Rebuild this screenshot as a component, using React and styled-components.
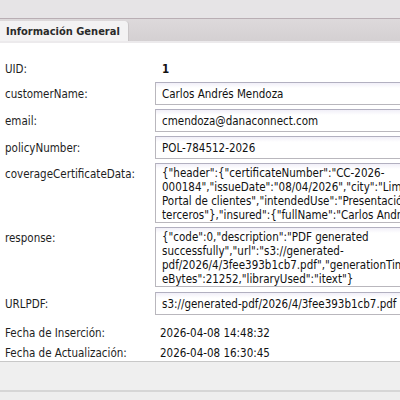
import styled, { createGlobalStyle } from "styled-components";

const GlobalStyle = createGlobalStyle`
    html, body {
        margin: 0;
        padding: 0;
        background: #eeeeee;
        overflow: hidden;
    }
`

const fields = [
    { label: 'customerName:', value: 'Carlos Andrés Mendoza' },
    { label: 'email:', value: 'cmendoza@danaconnect.com' },
    { label: 'policyNumber:', value: 'POL-784512-2026' },
]

const coverageLines = [
    '{"header":{"certificateNumber":"CC-2026-',
    '000184","issueDate":"08/04/2026","city":"Lima","channel":',
    'Portal de clientes","intendedUse":"Presentación ante',
    'terceros"},"insured":{"fullName":"Carlos Andrés Mendoza",',
]

const responseLines = [
    '{"code":0,"description":"PDF generated',
    'successfully","url":"s3://generated-',
    'pdf/2026/4/3fee393b1cb7.pdf","generationTimeMs":412,"fil',
    'eBytes":21252,"libraryUsed":"itext"}',
]

export default function App() {
    return (
        <Page>
            <GlobalStyle />
            <TopBar />
            <TabStrip>
                <Tab>Información General</Tab>
            </TabStrip>
            <Content>
                <Row>
                    <Label>UID:</Label>
                    <Plain bold>1</Plain>
                </Row>
                {fields.map(field =>
                    <Row key={field.label}>
                        <Label>{field.label}</Label>
                        <Input>{field.value}</Input>
                    </Row>
                )}
                <Row top>
                    <Label top>coverageCertificateData:</Label>
                    <TextArea>
                        {coverageLines.map(line => <div key={line}>{line}</div>)}
                    </TextArea>
                </Row>
                <Row top>
                    <Label top>response:</Label>
                    <TextArea>
                        {responseLines.map(line => <div key={line}>{line}</div>)}
                    </TextArea>
                </Row>
                <Row spaced>
                    <Label>URLPDF:</Label>
                    <Input>s3://generated-pdf/2026/4/3fee393b1cb7.pdf</Input>
                </Row>
                <DateRow first>
                    <Label>Fecha de Inserción:</Label>
                    <Plain>2026-04-08 14:48:32</Plain>
                </DateRow>
                <DateRow>
                    <Label>Fecha de Actualización:</Label>
                    <Plain>2026-04-08 16:30:45</Plain>
                </DateRow>
            </Content>
            <Footer />
        </Page>
    )
}

const Page = styled.div`
    width: 400px;
    height: 400px;
    overflow: hidden;

    display: flex;
    flex-direction: column;

    font-family: 'DejaVu Sans Condensed', 'DejaVu Sans', sans-serif;
    font-size: 11.5px;
    color: #1e1e1e;
`

const TopBar = styled.div`
    height: 18px;
    flex-shrink: 0;

    background-color: #e6e4e6;
    border-bottom: 1px solid #b9aeb4;
`

const TabStrip = styled.div`
    height: 22px;
    flex-shrink: 0;

    display: flex;
    align-items: flex-end;

    background: linear-gradient(#ddd9db, #d4d0d2);
    border-bottom: 2px solid #eceaec;
    box-shadow: 0 1px 0 #d2d0d2;
`

const Tab = styled.div`
    width: 122px;
    height: 20px;

    display: flex;
    align-items: center;

    padding-left: 6px;

    background-color: #f3f2f3;
    border-top-right-radius: 4px;
    border-right: 1px solid #c9c5c7;

    font-weight: bold;
    font-size: 11px;
    color: #2a2a2a;
`

const Content = styled.div`
    flex-shrink: 0;

    display: flex;
    flex-direction: column;
    gap: 4px;

    padding: 17px 0 0 5px;

    background-color: #ffffff;
    border-bottom: 1px solid #c8c8c8;
`

const Row = styled.div`
    min-height: 18px;

    display: flex;
    align-items: ${({ top }) => top ? 'flex-start' : 'center'};
    margin-top: ${({ spaced }) => spaced ? '1px' : '0'};
`

const DateRow = styled.div`
    height: 16px;

    display: flex;
    align-items: center;

    margin-top: ${({ first }) => first ? '6px' : '0'};
`

const Label = styled.div`
    width: 150px;
    flex-shrink: 0;
    padding-top: ${({ top }) => top ? '4px' : '0'};
`

const Plain = styled.div`
    padding-left: ${({ bold }) => bold ? '7px' : '5px'};
    font-weight: ${({ bold }) => bold ? 'bold' : 'normal'};
    color: #111111;
`

const Input = styled.div`
    width: 300px;
    height: 21px;
    flex-shrink: 0;

    display: flex;
    align-items: center;

    padding-left: 6px;

    background: linear-gradient(#f1eff8, #ffffff 5px);
    border: 1px solid #b9b7bd;
    border-top-color: #b2b0c0;

    white-space: nowrap;
    color: #111111;
`

const TextArea = styled.div`
    width: 300px;
    height: 56px;
    flex-shrink: 0;

    padding: 2px 0 0 6px;

    background: linear-gradient(#f1eff8, #ffffff 5px);
    border: 1px solid #b9b7bd;
    border-top-color: #b2b0c0;

    line-height: 14px;
    white-space: pre;
    overflow: hidden;
    color: #111111;
`

const Footer = styled.div`
    height: 28px;
    flex-shrink: 0;

    background-color: #efefef;
    border-bottom: 2px solid #d6d6d6;
`
